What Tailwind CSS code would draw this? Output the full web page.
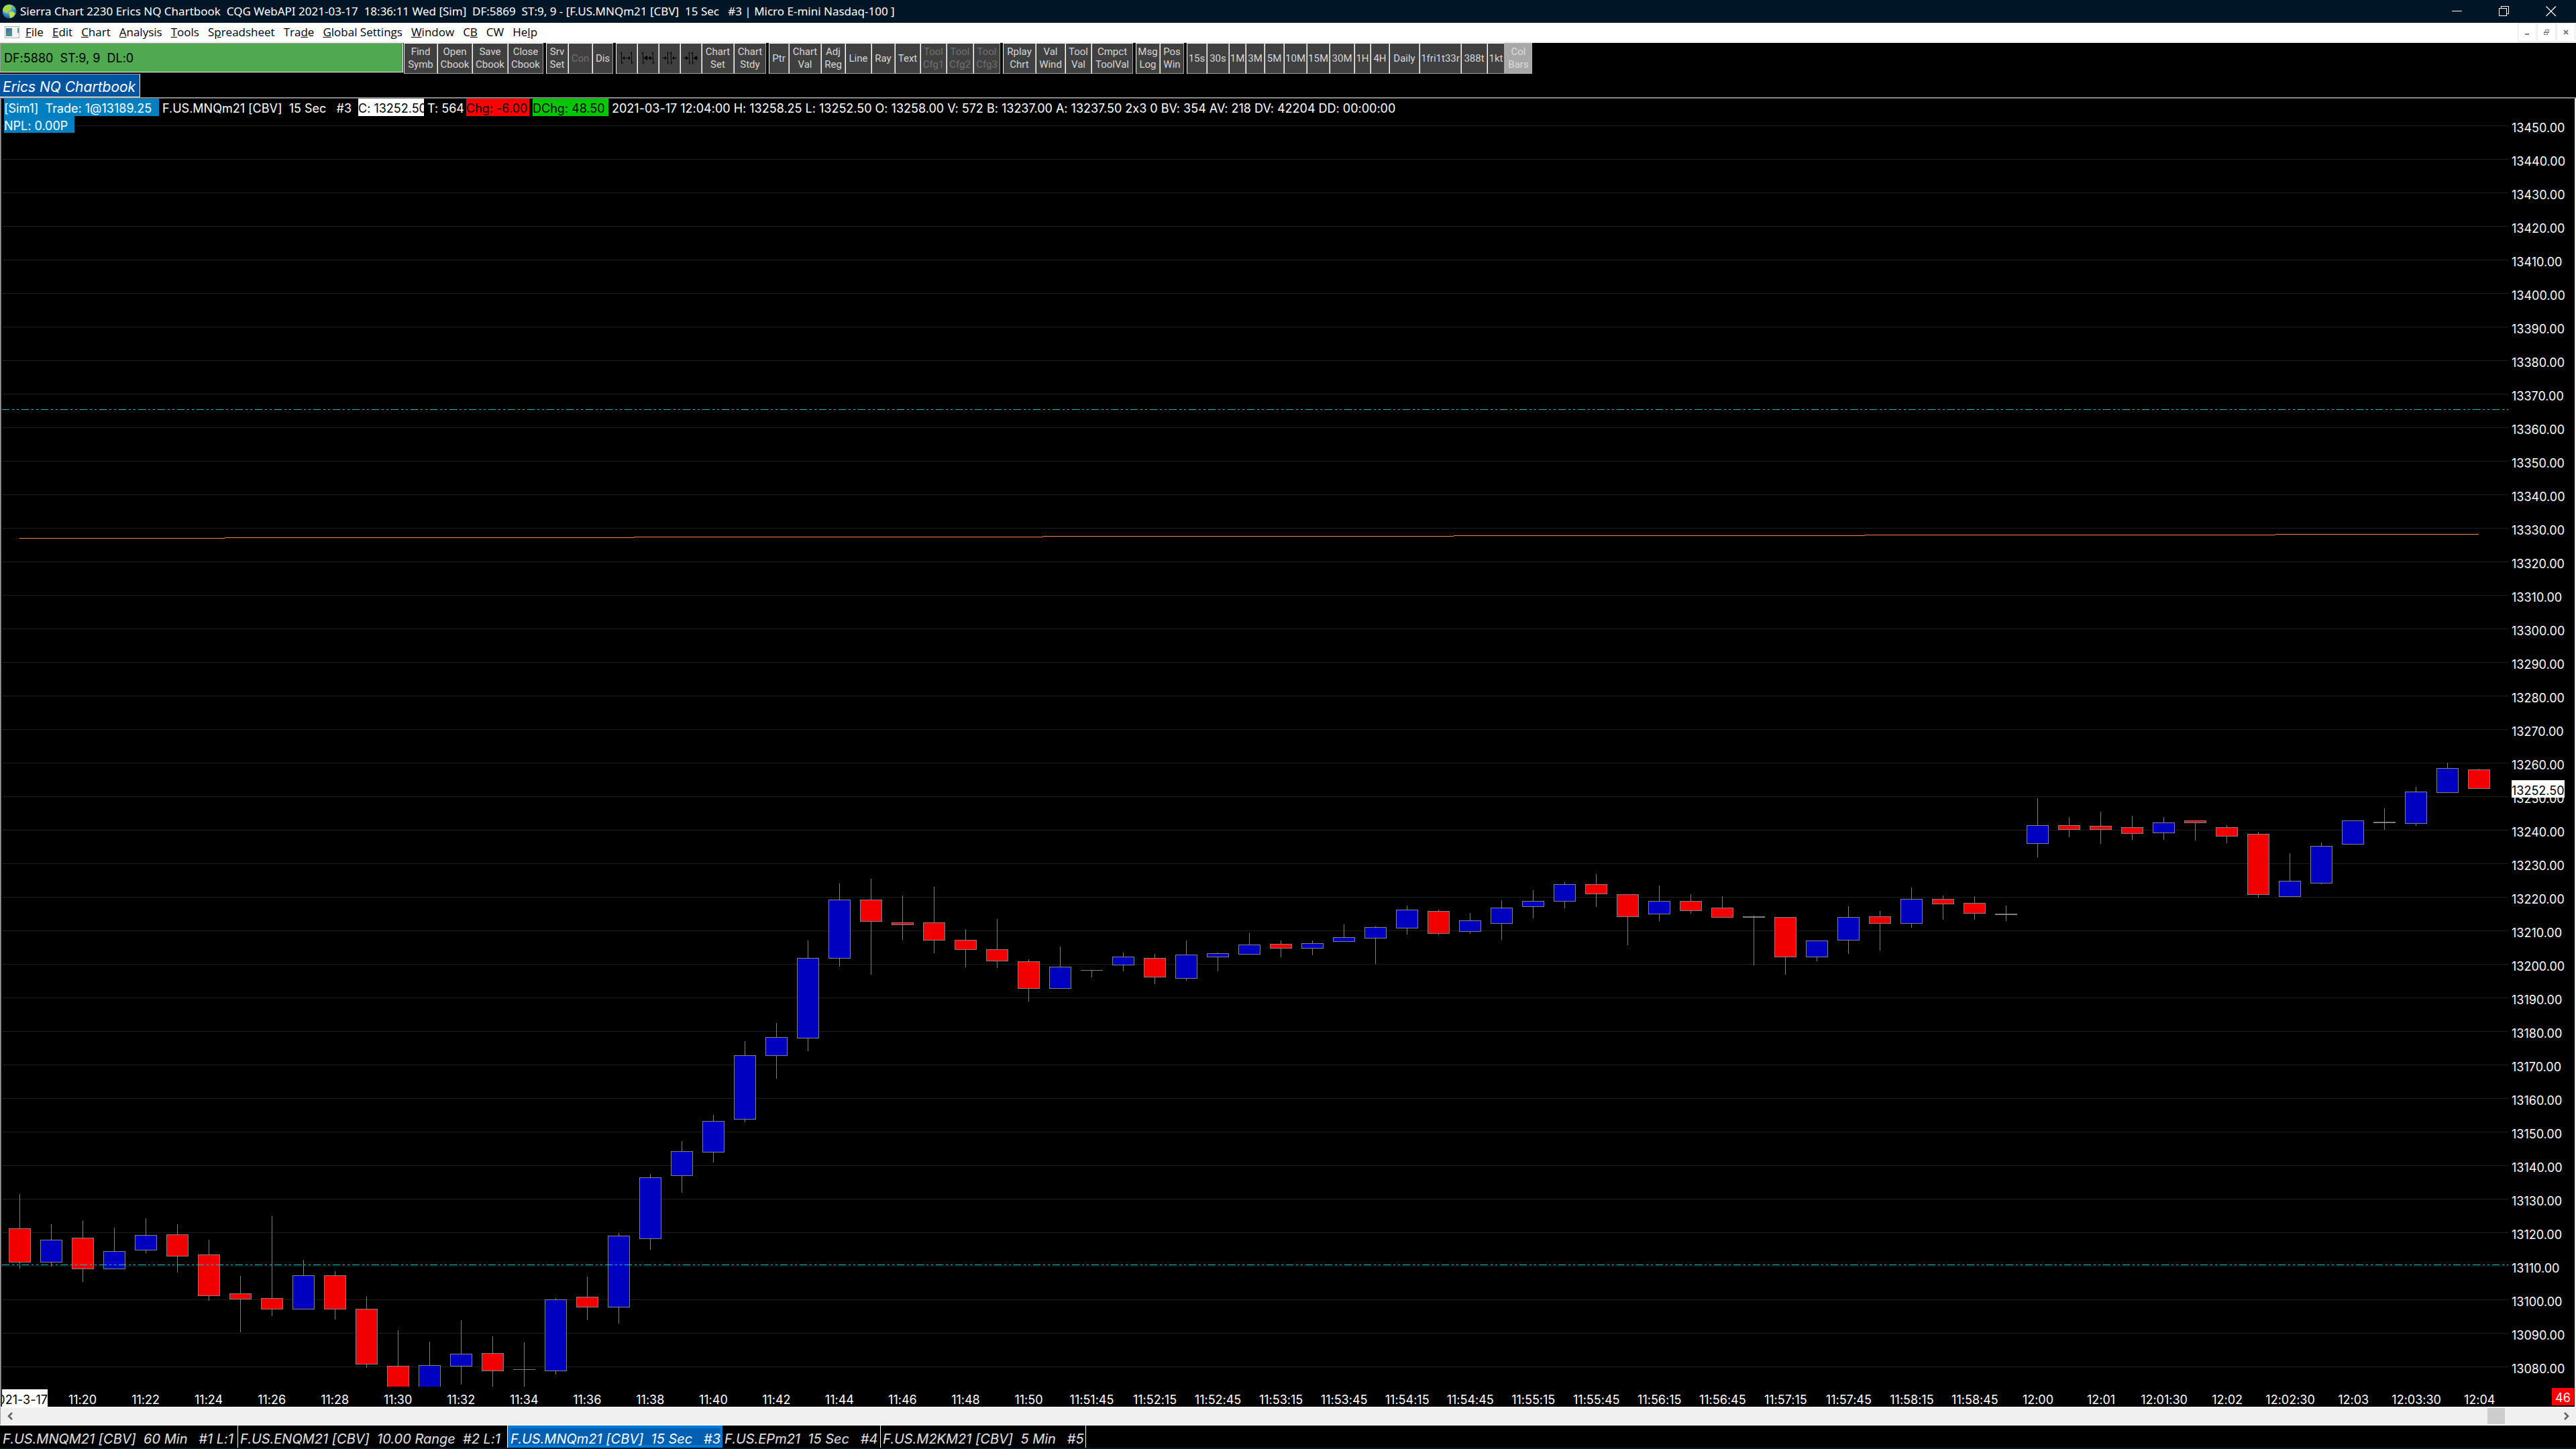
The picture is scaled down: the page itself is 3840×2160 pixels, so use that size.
<!DOCTYPE html>
<html lang="en">
<head>
    <meta charset="UTF-8" />
    <meta name="viewport" content="width=device-width, initial-scale=1.0" />
    <title>Sierra Chart 2230 Erics NQ Chartbook</title>
    <script src="https://cdn.jsdelivr.net/npm/@tailwindcss/browser@4"></script>
</head>
<body class="min-h-screen flex flex-col bg-black text-white font-['Inter',sans-serif] text-[18px] [font-feature-settings:'calt'_0] overflow-x-hidden">

    <!-- Title bar -->
    <header class="flex items-center justify-between h-[34px] shrink-0 bg-[#001627] pl-[3px] pr-[2px]">
        <div class="flex items-center gap-[5px]">
            <svg width="22" height="24" viewBox="0 0 22 24">
                <defs>
                    <radialGradient id="globe" cx="0.4" cy="0.3" r="0.8">
                        <stop offset="0" stop-color="#8fd0ff" />
                        <stop offset="0.6" stop-color="#2f86d0" />
                        <stop offset="1" stop-color="#0d4a8c" />
                    </radialGradient>
                </defs>
                <circle cx="11" cy="12" r="10.5" fill="url(#globe)" />
                <path d="M1 9 Q4 1 12 2 L16 4 L13 7 L14 10 L10 11 L8 15 L3 13 Z" fill="#a9d93c" />
                <path d="M10 13 L16 12 L20 15 L17 20 L12 22 L11 18 Z" fill="#c4e03a" />
                <path d="M17 4 L20 8 L18 10 L16 7 Z" fill="#7fc23a" />
            </svg>
            <h1 class="font-['Noto_Sans',sans-serif] text-[17px] leading-[24px] whitespace-pre">Sierra Chart 2230 Erics NQ Chartbook  CQG WebAPI 2021-03-17  18:36:11 Wed [Sim]  DF:5869  ST:9, 9 - [F.US.MNQm21 [CBV]  15 Sec   #3 | Micro E-mini Nasdaq-100 ]</h1>
        </div>
        <div class="flex">
            <button aria-label="Minimize" class="w-[70px] h-[34px] flex items-center justify-center">
                <svg width="16" height="16" viewBox="0 0 16 16" shape-rendering="crispEdges"><path d="M0 7.500H15" stroke="#fff" /></svg>
            </button>
            <button aria-label="Restore" class="w-[70px] h-[34px] flex items-center justify-center">
                <svg width="16" height="16" viewBox="0 0 16 16" fill="none" stroke="#fff" shape-rendering="crispEdges"><path d="M.5 3.500H11.500V14.500H.5ZM3.500 3.500V.5H14.500V11.500H11.500" /></svg>
            </button>
            <button aria-label="Close" class="w-[70px] h-[34px] flex items-center justify-center">
                <svg width="16" height="16" viewBox="0 0 16 16" stroke="#fff" stroke-width="1.200"><path d="M.5 .5L15 15M15 .5L.5 15" /></svg>
            </button>
        </div>
    </header>

    <!-- Menu bar -->
    <nav class="flex items-center justify-between h-[30px] shrink-0 bg-white border-b-2 border-[#f0f0f0] text-black pl-[7px]">
        <div class="flex items-center gap-[13px] font-['Open_Sans',sans-serif] text-[17px] leading-[24px]">
            <svg width="22" height="18" viewBox="0 0 22 18" class="-mr-1">
                <rect x="0.500" y="0.500" width="21" height="17" fill="#f4f4f6" stroke="#b0b4bc" />
                <rect x="2" y="3" width="9" height="12" fill="#4a8f8a" />
                <path d="M2 3H11L2 12Z" fill="#3f78a8" />
                <rect x="19" y="3" width="2" height="7" fill="#5aa08a" />
            </svg>
            <button><u>F</u>ile</button>
            <button><u>E</u>dit</button>
            <button><u>C</u>hart</button>
            <button><u>A</u>nalysis</button>
            <button><u>T</u>ools</button>
            <button>S<u>p</u>readsheet</button>
            <button>Tra<u>d</u>e</button>
            <button><u>G</u>lobal Settings</button>
            <button><u>W</u>indow</button>
            <button>C<u>B</u></button>
            <button>CW</button>
            <button>He<u>l</u>p</button>
        </div>
        <div class="flex gap-px pr-px">
            <button aria-label="Minimize chart" class="w-7 h-7 border border-[#e6e6e6] flex items-center justify-center">
                <svg width="10" height="10" viewBox="0 0 10 10" fill="#75838f" shape-rendering="crispEdges"><rect x="2" y="7" width="6" height="2" /></svg>
            </button>
            <button aria-label="Restore chart" class="w-7 h-7 border border-[#e6e6e6] flex items-center justify-center">
                <svg width="10" height="10" viewBox="0 0 10 10" fill="none" stroke="#75838f" shape-rendering="crispEdges"><path d="M3.500 3V1.500H8.500V5.500H7M3 1H9M1.500 4.500H6.500V8.500H1.500ZM1 5.500H7" /></svg>
            </button>
            <button aria-label="Close chart" class="w-7 h-7 border border-[#e6e6e6] flex items-center justify-center">
                <svg width="10" height="10" viewBox="0 0 10 10" stroke="#75838f" stroke-width="2.200"><path d="M2 2L8 8M8 2L2 8" /></svg>
            </button>
        </div>
    </nav>

    <!-- Control bar -->
    <div class="flex h-[46px] shrink-0 text-[#d6d6d6] font-['Roboto',sans-serif] text-[15px] leading-[19px] [&_button]:h-full [&_button]:shrink-0 [&_button]:flex [&_button]:items-center [&_button]:justify-center [&_button]:text-center [&_button]:bg-[#404040] [&_button]:border [&_button]:border-t-white [&_button]:border-l-white [&_button]:border-r-[#a0a0a0] [&_button]:border-b-[#a0a0a0] [&_button:disabled]:text-[#707070]">
        <div class="w-[601px] h-[44px] mr-px shrink-0 flex items-center whitespace-pre bg-[#50a850] border border-t-[#a0a0a0] border-l-[#a0a0a0] border-r-white border-b-white text-black font-['Inter',sans-serif] text-[18px] pl-[5px]">DF:5880  ST:9, 9  DL:0</div>
        <div class="flex gap-1">
            <div class="flex">
                <button class="w-[50px]">Find<br />Symb</button>
                <button class="w-[52px]">Open<br />Cbook</button>
                <button class="w-[53px]">Save<br />Cbook</button>
                <button class="w-[53px]">Close<br />Cbook</button>
            </div>
            <div class="flex">
                <button class="w-[33px]">Srv<br />Set</button>
                <button class="w-[36px]" disabled>Con</button>
                <button class="w-[31px]">Dis</button>
            </div>
            <div class="flex">
                <button class="w-[32px]" aria-label="Widen bar spacing">
                    <svg width="20" height="20" viewBox="0 0 20 20" fill="none" stroke="#000" shape-rendering="crispEdges"><path d="M0 2.500H3M2.500 0V19M2 16.500H5M17.500 0V19M15 2.500H18M17 16.500H20M4 9.500H16M6.500 7V12M5.500 8V11M13.500 7V12M14.500 8V11" /></svg>
                </button>
                <button class="w-[32px]" aria-label="Widen bars">
                    <svg width="20" height="20" viewBox="0 0 20 20" fill="none" stroke="#000" shape-rendering="crispEdges"><path d="M0 2.500H3M2.500 0V19M2 16.500H5M17.500 0V19M15 2.500H18M17 16.500H20M4 9.500H16" /><path fill="#000" d="M8 7V12L4 9.500ZM12 7V12L16 9.500Z" /></svg>
                </button>
                <button class="w-[32px]" aria-label="Narrow bar spacing">
                    <svg width="22" height="20" viewBox="0 0 22 20" fill="none" stroke="#000" shape-rendering="crispEdges"><path d="M7 2.500H9M8.500 0V19M8 16.500H11M13.500 0V19M11 2.500H14M13 16.500H16M0 9.500H7M4.500 7V12M5.500 8V11M15 9.500H22M17.500 7V12M16.500 8V11" /></svg>
                </button>
                <button class="w-[32px]" aria-label="Narrow bars">
                    <svg width="22" height="20" viewBox="0 0 22 20" fill="none" stroke="#000" shape-rendering="crispEdges"><path d="M7 2.500H9M8.500 0V19M8 16.500H11M13.500 0V19M11 2.500H14M13 16.500H16M0 9.500H7M15 9.500H22" /><path fill="#000" d="M3 7V12L7 9.500ZM19 7V12L15 9.500Z" /></svg>
                </button>
                <button class="w-[48px]">Chart<br />Set</button>
                <button class="w-[48px]">Chart<br />Stdy</button>
            </div>
            <div class="flex">
                <button class="w-[30px]">Ptr</button>
                <button class="w-[48px]">Chart<br />Val</button>
                <button class="w-[36px]">Adj<br />Reg</button>
                <button class="w-[39px]">Line</button>
                <button class="w-[35px]">Ray</button>
                <button class="w-[38px]">Text</button>
                <button class="w-[39px]" disabled>Tool<br />Cfg1</button>
                <button class="w-[40px]" disabled>Tool<br />Cfg2</button>
                <button class="w-[40px]" disabled>Tool<br />Cfg3</button>
            </div>
            <div class="flex">
                <button class="w-[49px]">Rplay<br />Chrt</button>
                <button class="w-[44px]">Val<br />Wind</button>
                <button class="w-[39px]">Tool<br />Val</button>
                <button class="w-[62px]">Cmpct<br />ToolVal</button>
            </div>
            <div class="flex">
                <button class="w-[36px]">Msg<br />Log</button>
                <button class="w-[36px]">Pos<br />Win</button>
            </div>
            <div class="flex">
                <button class="w-[30px]">15s</button>
                <button class="w-[33px]">30s</button>
                <button class="w-[25px]">1M</button>
                <button class="w-[28px]">3M</button>
                <button class="w-[29px]">5M</button>
                <button class="w-[34px]">10M</button>
                <button class="w-[34px]">15M</button>
                <button class="w-[37px]">30M</button>
                <button class="w-[24px]">1H</button>
                <button class="w-[28px]">4H</button>
                <button class="w-[45px]">Daily</button>
                <button class="w-[62px]">1fri1t33r</button>
                <button class="w-[39px]">388t</button>
                <button class="w-[26px]">1kt</button>
                <button class="w-[41px] bg-[#a8a8a8]! text-[#dcdcdc] border-[#b0b0b0]!">Col<br />Bars</button>
            </div>
        </div>
    </div>

    <!-- Chartbook tab -->
    <div class="flex h-[35px] shrink-0">
        <button class="w-[209px] bg-[#0055a0] border-t border-r border-b border-t-[#a0a0a0] border-r-white border-b-white italic text-[21px] leading-[30px] text-left pl-1 pt-1 whitespace-nowrap">Erics NQ Chartbook</button>
    </div>

    <!-- Chart window -->
    <main class="flex-1 flex flex-col border-t border-[#a0a0a0]">
        <div class="flex-1 flex flex-col border-t border-t-[#696969] border-l border-l-[#a0a0a0] border-r border-r-white">
            <div class="flex-1 flex border-l border-l-[#696969] border-r border-r-[#e3e3e3]">
                <div class="flex-1 relative">
                    <svg id="plot" class="block w-full h-0 min-h-full" viewBox="0 0 3740 1920" preserveAspectRatio="none" shape-rendering="crispEdges"></svg>
                    <div class="absolute left-1 top-0 leading-[30px]">
                        <div class="flex gap-[5px] [&>span]:whitespace-pre [&>span]:h-[26px]">
                            <span class="w-[231px] bg-[#0080c0]">[Sim1]  Trade: 1@13189.25</span>
                            <span class="w-[287px]">F.US.MNQm21 [CBV]  15 Sec   #3</span>
                            <span class="w-[98px] bg-white text-black">C: 13252.50</span>
                            <span class="w-[53px]">T: 564</span>
                            <span class="w-[94px] bg-[#ff0000] text-black">Chg: -6.00</span>
                            <span class="w-[113px] bg-[#00c800] text-black">DChg: 48.50</span>
                            <span>2021-03-17 12:04:00 H: 13258.25 L: 13252.50 O: 13258.00 V: 572 B: 13237.00 A: 13237.50 2x3 0 BV: 354 AV: 218 DV: 42204 DD: 00:00:00</span>
                        </div>
                        <div class="w-[105px] h-[25px] bg-[#0080c0]">NPL: 0.00P</div>
                    </div>
                </div>
                <div class="w-[96px] shrink-0 relative pt-[19px] pl-[2px] pb-px">
                    <div id="prices" class="leading-[50px]"></div>
                    <span id="last" class="absolute left-[2px] h-[26px] bg-white text-black leading-[32px]">13252.50</span>
                </div>
            </div>
            <!-- Time axis -->
            <div class="flex h-[30px] items-center border-l border-l-[#696969] border-r border-r-[#e3e3e3] leading-[26px]">
                <div class="w-[74px] shrink-0 pl-px pr-[5px]">
                    <div class="flex justify-end overflow-hidden bg-white text-black h-[26px] mt-1 leading-[32px] whitespace-nowrap"><span>2021-3-17</span></div>
                </div>
                <div id="times" class="flex-1 flex text-center pt-[10px]"></div>
                <div class="w-[95px] shrink-0 flex justify-end pr-px"><span class="w-[33px] h-[26px] leading-[30px] bg-[#ff0000] text-center">46</span></div>
            </div>
        </div>
        <!-- Scroll bar -->
        <div class="flex items-center h-[28px] shrink-0 bg-[#f0f0f0] border-t border-b-2 border-white border-l border-l-[#a0a0a0]">
            <button aria-label="Scroll left" class="w-7 flex justify-center">
                <svg width="10" height="12" viewBox="0 0 10 12" fill="none" stroke="#606060" stroke-width="2.500"><path d="M8 1L3 6L8 11" /></svg>
            </button>
            <div class="flex-1 flex justify-end pr-[78px]"><div class="w-[26px] h-[24px] bg-[#cdcdcd]"></div></div>
            <button aria-label="Scroll right" class="w-7 flex justify-center">
                <svg width="10" height="12" viewBox="0 0 10 12" fill="none" stroke="#606060" stroke-width="2.500"><path d="M2 1L7 6L2 11" /></svg>
            </button>
        </div>
    </main>

    <!-- Chart tabs -->
    <footer class="flex h-[35px] shrink-0 border-b-2 border-[#001627] pl-px italic text-[20px] leading-[33px] text-[#e0e0e0] [&_button]:whitespace-pre [&_button]:text-left [&_button]:pl-[3px] [&_button]:pt-1 [&_button]:border-r [&_button]:border-white">
        <button class="w-[354px]">F.US.MNQM21 [CBV]  60 Min   #1 L:1</button>
        <button class="w-[402px]">F.US.ENQM21 [CBV]  10.00 Range  #2 L:1</button>
        <button class="w-[320px] bg-[#005fb0] text-white border-4! border-t-[#0078d7]! border-b-[#0078d7]! border-l-[#0078d7]! border-r-[#0078d7]! pl-0! leading-[25px]">F.US.MNQm21 [CBV]  15 Sec   #3</button>
        <button class="w-[236px]">F.US.EPm21  15 Sec   #4</button>
        <button class="w-[306px]">F.US.M2KM21 [CBV]  5 Min   #5</button>
    </footer>

<script>
    // high, body top, body bottom, low (all + 13000), u = up, d = down
    const bars = [
        ['d', 131.5, 121.25, 111.25, 109.5], ['u', 122.5, 117.75, 111.25, 110], ['d', 123.5, 118.5, 109.25, 105.5],
        ['u', 121.5, 114.5, 109.25, 109.25], ['u', 124.25, 119.25, 114.75, 114], ['d', 122.5, 119.5, 113, 108.25],
        ['d', 117.75, 113.5, 101.25, 99.75], ['d', 107, 101.75, 100.25, 90.5], ['d', 124.75, 100.5, 97.25, 95.25],
        ['u', 111.75, 107.25, 97.25, 97.25], ['d', 108.5, 107.25, 97.25, 94.25], ['d', 100.75, 97.25, 80.75, 79.75],
        ['d', 90.75, 80.25, 72, 70], ['u', 87.5, 80.5, 72, 70], ['u', 93.75, 83.75, 80.25, 74.75],
        ['d', 89, 84, 78.75, 72], ['u', 87.25, 79.25, 79.25, 72], ['u', 100.5, 100, 78.75, 77.75],
        ['d', 106.75, 100.75, 97.75, 94], ['u', 119.75, 119, 97.75, 93], ['u', 137.5, 136.5, 118.25, 115],
        ['u', 147.25, 144.25, 137, 132], ['u', 155, 153.25, 144, 141], ['u', 177, 172.75, 153.75, 153],
        ['u', 182.5, 178.25, 172.75, 166], ['u', 207, 201.75, 178, 174.25], ['u', 224, 219.25, 201.75, 199.5],
        ['d', 225.5, 219.25, 212.75, 197], ['d', 220.5, 212.5, 211.75, 207.5], ['d', 223, 212.5, 207.25, 203.5],
        ['d', 210.5, 207.25, 204.5, 199.25], ['d', 213.5, 204.5, 201, 199], ['d', 201.5, 200.75, 192.75, 189],
        ['u', 205.25, 199.25, 192.75, 192.75], ['u', 198.25, 198.25, 198.25, 196.25], ['u', 203.5, 202.25, 199.75, 198],
        ['d', 203, 201.75, 196.25, 194.25], ['u', 207, 202.75, 195.75, 195.25], ['u', 203.5, 203.25, 202.25, 198],
        ['u', 209.25, 205.75, 203, 203], ['d', 207, 206, 204.75, 202.25], ['u', 207, 206.25, 204.75, 202.75],
        ['u', 211.75, 208, 206.75, 206.75], ['u', 211.25, 211, 207.75, 200.25], ['u', 217.5, 216.25, 210.75, 209],
        ['d', 216.25, 215.75, 209.25, 208.75], ['u', 215.25, 213, 209.75, 209.25], ['u', 219, 216.75, 212.25, 207.5],
        ['u', 222, 218.75, 217.25, 213.75], ['u', 224.5, 223.75, 218.75, 216.75], ['d', 226.75, 223.75, 221, 217.25],
        ['d', 220.75, 220.75, 214.25, 205.75], ['u', 223.5, 218.75, 215, 213], ['d', 220.75, 218.75, 216, 215.25],
        ['d', 220.25, 216.75, 214, 214], ['d', 214.5, 214.25, 214, 199.75], ['d', 214, 214, 202.25, 197],
        ['u', 207, 207, 202.25, 201], ['u', 217.25, 214, 207.25, 203.25], ['d', 215.75, 214.25, 212.25, 204.25],
        ['u', 222.75, 219.5, 212.25, 211], ['d', 220.5, 219.5, 218, 213.5], ['d', 220.25, 218.25, 215.25, 213.5],
        ['d', 217.5, 215, 214.75, 213], ['u', 249.5, 241.5, 236, 232], ['d', 243.75, 241.5, 240.25, 238],
        ['d', 245.5, 241.25, 240.25, 236], ['d', 244.25, 240.75, 239, 237.25], ['u', 243.75, 242.25, 239.25, 237.25],
        ['d', 242.75, 242.75, 242.25, 237], ['d', 241.5, 240.75, 238.25, 236.25], ['d', 239.5, 238.75, 220.75, 220],
        ['u', 233, 224.75, 220.25, 220.25], ['u', 236.25, 235.25, 224.25, 224], ['u', 242.75, 242.75, 235.75, 235.75],
        ['u', 246.5, 242.5, 242.25, 240.25], ['u', 252.75, 251.5, 242, 241.5], ['u', 260, 258.5, 251.25, 251.25],
        ['d', 258.25, 258, 252.5, 252.5]
    ]
    const times = ['11:20', '11:22', '11:24', '11:26', '11:28', '11:30', '11:32', '11:34', '11:36', '11:38', '11:40', '11:42', '11:44', '11:46', '11:48', '11:50',
        '11:51:45', '11:52:15', '11:52:45', '11:53:15', '11:53:45', '11:54:15', '11:54:45', '11:55:15', '11:55:45', '11:56:15', '11:56:45', '11:57:15', '11:57:45',
        '11:58:15', '11:58:45', '12:00', '12:01', '12:01:30', '12:02', '12:02:30', '12:03', '12:03:30', '12:04']

    // 5 units per point, 13450 is the top grid line
    const y = p => Math.round(40 + (450 - p) * 5)

    let svg = ''
    let labels = ''
    for (let p = 450; p >= 80; p -= 10) {
        svg += `<rect x="1" y="${y(p)}" width="3736" height="1" fill="#1e1e1e"/>`
        labels += `<div class="h-[50px]">${13000 + p}.00</div>`
    }
    bars.forEach(([dir, high, top, bottom, low], i) => {
        const x = 27 + i * 47
        const fill = dir == 'u' ? '#0000c0' : '#f20000'
        svg += `<rect x="${x}" y="${y(high)}" width="1" height="${y(low) - y(high) + 1}" fill="#808080"/>`
        svg += `<rect x="${x - 16}" y="${y(top)}" width="33" height="${y(bottom) - y(top) + 1}" fill="#808080"/>`
        if (y(bottom) - y(top) > 1) {
            svg += `<rect x="${x - 15}" y="${y(top) + 1}" width="31" height="${y(bottom) - y(top) - 1}" fill="${fill}"/>`
        }
    })
    // daily levels
    for (const level of [463, 1738]) {
        svg += `<path d="M1 ${level}.5H3737" stroke="#00c0c0" stroke-dasharray="11 4 3 4 3 4"/>`
    }
    // moving average
    const steps = [27, 333, 943, 1553, 2165, 2778, 3390, 3693]
    for (let i = 0; i < 7; i++) {
        svg += `<rect x="${steps[i]}" y="${655 - i}" width="${steps[i + 1] - steps[i]}" height="1" fill="#ff8040"/>`
    }
    document.getElementById('plot').innerHTML = svg
    document.getElementById('prices').innerHTML = labels
    document.getElementById('last').style.top = `${y(252.5) - 12}px`
    document.getElementById('times').innerHTML = times.map(t => `<div class="flex-1 w-0 flex justify-center">${t}</div>`).join('')
</script>
</body>
</html>
